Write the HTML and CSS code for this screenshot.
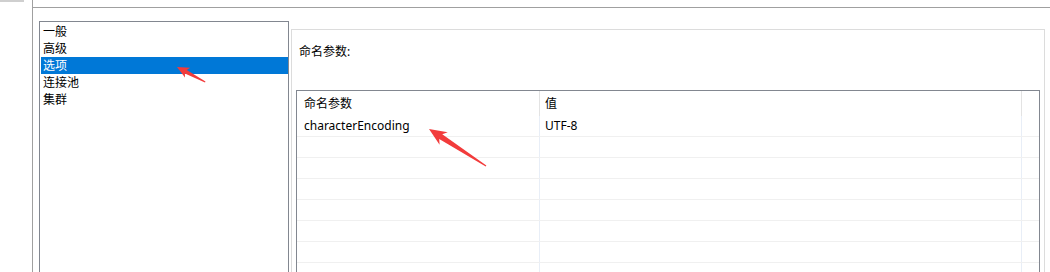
FILE: index.html
```html
<!DOCTYPE html>
<html lang="zh-CN">
<head>
    <meta charset="UTF-8">
    <title>选项</title>
    <link rel="stylesheet" href="styles.css">
</head>
<body>
    <div class="window">
        <div class="side"><div class="side-tab"></div></div>
        <div class="main">
            <div class="topbar"></div>
            <div class="content">
                <ul class="list">
                    <li>一般</li>
                    <li>高级</li>
                    <li class="selected">选项</li>
                    <li>连接池</li>
                    <li>集群</li>
                </ul>
                <div class="panel">
                    <div class="panel-label">命名参数:</div>
                    <div class="grid">
                        <div class="row head">
                            <div class="cell c1">命名参数</div>
                            <div class="cell c2">值</div>
                            <div class="cell c3"></div>
                        </div>
                        <div class="row">
                            <div class="cell c1">characterEncoding</div>
                            <div class="cell c2">UTF-8</div>
                            <div class="cell c3"></div>
                        </div>
                        <div class="row"><div class="cell c1"></div><div class="cell c2"></div><div class="cell c3"></div></div>
                        <div class="row"><div class="cell c1"></div><div class="cell c2"></div><div class="cell c3"></div></div>
                        <div class="row"><div class="cell c1"></div><div class="cell c2"></div><div class="cell c3"></div></div>
                        <div class="row"><div class="cell c1"></div><div class="cell c2"></div><div class="cell c3"></div></div>
                        <div class="row"><div class="cell c1"></div><div class="cell c2"></div><div class="cell c3"></div></div>
                        <div class="row"><div class="cell c1"></div><div class="cell c2"></div><div class="cell c3"></div></div>
                        <div class="row"><div class="cell c1"></div><div class="cell c2"></div><div class="cell c3"></div></div>
                    </div>
                </div>
            </div>
        </div>

        <!-- 标注箭头 -->
        <svg class="marks" width="1050" height="272" viewBox="0 0 1050 272">
            <polygon transform="translate(177 67) rotate(28)" points="0,0 12,-5.5 10,-2 32,-0.5 32,0.5 10,2 12,5.5" fill="#f23b3b"/>
            <polygon transform="translate(429 129) rotate(33)" points="0,0 17.5,-7.5 14,-2.8 68,-0.6 68,0.6 14,2.8 17.5,7.5" fill="#f23b3b"/>
        </svg>
    </div>
</body>
</html>
```

FILE: styles.css
```css
html, body {
    margin: 0;
    padding: 0;
    background: #fff;
    overflow: hidden;
}
body {
    font-family: "Noto Sans", "Noto Sans CJK SC", sans-serif;
    font-size: 12px;
    color: #000;
}
.window {
    position: relative;
    display: flex;
    width: 1050px;
    height: 272px;
    overflow: hidden;
}
.side {
    width: 32px;
    flex: none;
    border-right: 1px solid #a0a0a0;
}
.side-tab {
    width: 24px;
    height: 2px;
    background: #cfcfcf;
}
.main {
    flex: 1;
}
.topbar {
    height: 7px;
    border-bottom: 1px solid #a0a0a0;
}
.content {
    display: flex;
    align-items: flex-start;
    padding-left: 6px;
}
.list {
    list-style: none;
    margin: 13px 0 0 0;
    padding: 1px 0 0 1px;
    width: 247px;
    height: 300px;
    border: 1px solid #828790;
    flex: none;
}
.list li {
    height: 17px;
    line-height: 17px;
    padding-left: 2px;
}
.list li.selected {
    background: #0078d7;
    color: #fff;
}
.panel {
    margin: 21px 0 0 2px;
    width: 744px;
    height: 300px;
    padding: 0 4px;
    border: 1px solid #dcdcdc;
    flex: none;
}
.panel-label {
    padding: 14px 0 0 3px;
    line-height: 16px;
}
.grid {
    margin-top: 30px;
    border: 1px solid #828790;
    height: 260px;
}
.row {
    display: flex;
    height: 20px;
    line-height: 20px;
    border-bottom: 1px solid #f0f0f0;
}
.row.head {
    height: 25px;
    line-height: 25px;
    border-bottom: none;
}
.cell {
    white-space: nowrap;
}
.c1 {
    width: 235px;
    padding-left: 7px;
    border-right: 1px solid #e8eef7;
}
.c2 {
    width: 476px;
    padding-left: 5px;
    border-right: 1px solid #e8eef7;
}
.c3 {
    flex: 1;
}
.head .c1,
.head .c2 {
    border-right-color: #e3e3e3;
}
.marks {
    position: absolute;
    left: 0;
    top: 0;
    pointer-events: none;
}
```
